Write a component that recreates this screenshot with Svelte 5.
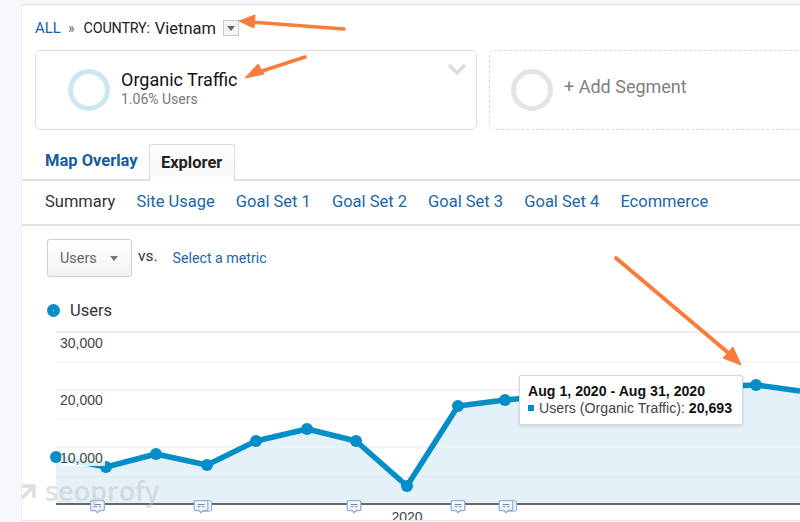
<script lang="ts">
  const subTabs = ['Site Usage', 'Goal Set 1', 'Goal Set 2', 'Goal Set 3', 'Goal Set 4', 'Ecommerce'];

  const chartLeft = 56;
  const chartTop = 330;
  const points = [
    [56, 457], [106, 467], [156, 454], [207, 465], [256, 441], [307, 429], [356, 441], [407, 486],
    [458, 406], [505, 400], [555, 395], [605, 390], [655, 388], [705, 387], [756, 385], [800, 391],
  ].map(([x, y]) => [x - chartLeft, y - chartTop]);
  const baseline = 174;
  const linePath = points.map(([x, y]) => `${x},${y}`).join(' ');
  const areaPath = `0,${baseline} ${linePath} 744,${baseline}`;
  const gridLines = [2, 32, 60, 89, 117, 147];
  const yLabels = [
    { text: '30,000', y: 18 },
    { text: '20,000', y: 75 },
    { text: '10,000', y: 133 },
  ];
  // stacked: a second note sits right behind the first one
  const notes = [
    { x: 41.5 },
    { x: 145, stacked: true },
    { x: 298 },
    { x: 402 },
    { x: 450, stacked: true },
  ];
</script>

<div class="page">
  <main class="panel">
    <nav class="crumbs">
      <span class="all">ALL</span>
      <span class="sep">»</span>
      <span class="country">COUNTRY:</span>
      <span class="value">Vietnam</span>
      <span class="drop"><i></i></span>
    </nav>

    <section class="segments">
      <div class="segment">
        <span class="ring blue"></span>
        <div class="seg-text">
          <div class="seg-name">Organic Traffic</div>
          <div class="seg-sub">1.06% Users</div>
        </div>
        <svg class="chev" width="20" height="12" viewBox="0 0 20 12">
          <path d="M2 2l8 8 8-8" fill="none" stroke="#dcdcdc" stroke-width="3.5" />
        </svg>
      </div>
      <div class="segment add">
        <span class="ring grey"></span>
        <span class="add-label">+ Add Segment</span>
      </div>
    </section>

    <div class="tabs">
      <span class="tab">Map Overlay</span>
      <span class="tab active">Explorer</span>
    </div>

    <div class="subtabs">
      <span class="current">Summary</span>
      {#each subTabs as t}
        <span class="link">{t}</span>
      {/each}
    </div>

    <div class="metric-row">
      <span class="metric-btn">Users <i></i></span>
      <span class="vs">vs.</span>
      <span class="select">Select a metric</span>
    </div>

    <div class="legend">
      <span class="dot"></span>
      <span>Users</span>
    </div>

    <div class="chart">
      <svg class="plot" width="744" height="192" viewBox="0 0 744 192">
        {#each gridLines as y, i}
          <line x1="0" x2="744" y1={y} y2={y} stroke={i % 2 === 0 ? '#eeeeee' : '#f6f6f6'} stroke-width={i === 0 ? 2 : 1.5} />
        {/each}
        <polygon points={areaPath} fill="#e4f1f8" />
        <line x1="0" x2="744" y1="117" y2="117" stroke="#f0f4f6" />
        <line x1="0" x2="744" y1="147" y2="147" stroke="#dbe9f0" />
        <line x1="0" x2="744" y1={baseline} y2={baseline} stroke="#666" stroke-width="2" />
        <polyline points={linePath} fill="none" stroke="#058dc7" stroke-width="5.5" stroke-linejoin="round" />
        {#each points as [x, y], i}
          {#if i !== 15}
            <circle cx={x} cy={y} r="6" fill="#058dc7" />
          {/if}
        {/each}
        <rect x="5" y="120" width="44" height="16" fill="#fff" opacity="0.85" />
        {#each yLabels as l}
          <text class="ylabel" x="4" y={l.y}>{l.text}</text>
        {/each}
        {#each notes as n}
          <g transform="translate({n.x - 7.5},170)">
            {#if n.stacked}
              <path d="M6 .7h11a1 1 0 0 1 1 1v8.500a1 1 0 0 1-1 1h-11z" fill="#eef4fa" stroke="#8fb2d4" />
            {/if}
            <path d="M1.700 .7h11.600a1 1 0 0 1 1 1v7.800a1 1 0 0 1-1 1h-3.800l-2 2.200-2-2.200h-3.800a1 1 0 0 1-1-1v-7.800a1 1 0 0 1 1-1z" fill="#f4f8fc" stroke="#8fb2d4" stroke-width="1.300" />
            <path d="M4 4.500h7M4 6.700h3M8.500 6.700h2.500" stroke="#7d868e" fill="none" />
          </g>
        {/each}
        <text class="xlabel" x="351" y="192" text-anchor="middle">2020</text>
      </svg>

      <div class="watermark">
        <svg width="18" height="16" viewBox="0 0 18 16">
          <path d="M2 3h13v12M15 3L3 15" fill="none" stroke="#dcdedf" stroke-width="3.500" />
        </svg>
        <span>seoprofy</span>
      </div>

      <div class="tooltip">
        <div class="tip-date">Aug 1, 2020 - Aug 31, 2020</div>
        <div class="tip-row"><i></i>Users (Organic Traffic): <b>20,693</b></div>
      </div>
    </div>
  </main>

  <!-- hand-drawn annotations on top of the screenshot -->
  <svg class="arrows" width="800" height="522" viewBox="0 0 800 522">
    <g fill="#f97c3c" stroke="#f97c3c">
      <path d="M344 29L250 22" stroke-width="3.500" stroke-linecap="round" />
      <path d="M239 21L255 15 254 28z" />
      <path d="M305 57L256 73" stroke-width="3.500" stroke-linecap="round" />
      <path d="M245 78L258 64 264 74z" />
      <path d="M616 258L732 356" stroke-width="4" stroke-linecap="round" />
      <path d="M741 365L723 358 733 347z" />
    </g>
  </svg>
</div>

<style>
  :global(body) {
    margin: 0;
    background: #f6f8fb;
  }

  .page {
    position: relative;
    width: 800px;
    height: 522px;
    overflow: hidden;
    font-family: Roboto, sans-serif;
    padding-top: 4px;
    box-sizing: border-box;
  }

  .panel {
    margin-left: 21px;
    height: 517px;
    background: #fff;
    border-top: 1px solid #e2e2e2;
    border-left: 1px solid #eceef1;
    border-bottom: 1px solid #e2e4e6;
    box-sizing: border-box;
    overflow: hidden;
  }

  .crumbs {
    display: flex;
    align-items: center;
    height: 24px;
    margin-top: 11px;
    padding-left: 13px;
    color: #222;
  }

  .all {
    color: #1a5f9e;
    font-size: 15px;
  }

  .sep {
    margin: 0 9px 0 7px;
    color: #666;
    font-size: 14px;
  }

  .country {
    font-size: 14.4px;
    letter-spacing: -0.2px;
  }

  .value {
    margin-left: 5px;
    font-size: 16.5px;
  }

  .drop {
    display: flex;
    align-items: center;
    justify-content: center;
    width: 14px;
    height: 14px;
    margin-left: 7px;
    border: 1px solid #c8c8c8;
    background: #f4f4f4;
  }

  .drop i {
    border: 4.5px solid transparent;
    border-top: 5px solid #666;
    border-bottom: 0;
  }

  .segments {
    display: flex;
    gap: 12px;
    margin: 10px 0 0 13px;
  }

  .segment {
    position: relative;
    display: flex;
    align-items: center;
    width: 442px;
    height: 80px;
    flex: none;
    box-sizing: border-box;
    border: 1px solid #dedede;
    border-radius: 5px;
    padding-left: 32px;
  }

  .segment.add {
    width: 360px;
    border: 1px dashed #d8d8d8;
    padding-left: 21px;
  }

  .ring {
    width: 42px;
    height: 42px;
    box-sizing: border-box;
    border-radius: 50%;
    border: 5px solid #cde6f3;
    flex: none;
  }

  .ring.grey {
    border-color: #e4e4e4;
  }

  .seg-text {
    margin-left: 11px;
    margin-top: -4px;
  }

  .seg-name {
    font-size: 18px;
    line-height: 22px;
    color: #111;
  }

  .seg-sub {
    font-size: 14px;
    line-height: 16px;
    color: #777;
  }

  .add-label {
    margin: 0 0 8px 11px;
    font-size: 18px;
    color: #808080;
  }

  .chev {
    position: absolute;
    right: 9px;
    top: 12px;
  }

  .tabs {
    display: flex;
    align-items: flex-end;
    height: 38px;
    margin-top: 11px;
    border-bottom: 2px solid #e0e0e0;
    font-size: 16.5px;
    font-weight: 700;
    color: #125da0;
  }

  .tab {
    padding: 0 11px 9px 23px;
  }

  .tab.active {
    width: 86px;
    height: 37px;
    box-sizing: border-box;
    padding: 8px 0 0;
    text-align: center;
    margin-bottom: -2px;
    color: #222;
    border: 1px solid #dcdcdc;
    border-bottom: 0;
    border-radius: 3px 3px 0 0;
    background: linear-gradient(#fff, #f8f8f8 70%, #fff);
  }

  .subtabs {
    display: flex;
    align-items: center;
    gap: 21.1px;
    height: 45px;
    padding: 0 0 2px 23px;
    box-sizing: border-box;
    border-bottom: 2px solid #e0e0e0;
    font-size: 16.5px;
    color: #1a66a8;
    white-space: nowrap;
  }

  .current {
    color: #333;
  }

  .metric-row {
    display: flex;
    align-items: center;
    height: 40px;
    margin: 12px 0 0 25px;
  }

  .metric-btn {
    display: flex;
    align-items: center;
    justify-content: space-between;
    width: 85px;
    height: 38px;
    box-sizing: border-box;
    padding: 0 13px 0 12px;
    border: 1px solid #d0d0d0;
    border-radius: 3px;
    background: linear-gradient(#fff, #f2f2f2);
    font-size: 14.4px;
    color: #666;
  }

  .metric-btn i {
    border: 4.5px solid transparent;
    border-top: 5px solid #777;
    border-bottom: 0;
  }

  .vs {
    margin: -4px 0 0 6px;
    font-size: 15.5px;
    color: #333;
  }

  .select {
    margin-left: 15px;
    font-size: 14.2px;
    color: #1a66a8;
  }

  .legend {
    display: flex;
    align-items: center;
    gap: 10px;
    margin: 22px 0 0 25px;
    height: 20px;
    font-size: 16.5px;
    color: #333;
  }

  .dot {
    position: relative;
    width: 13px;
    height: 13px;
    border-radius: 50%;
    background: #058dc7;
  }

  .dot::after {
    content: '';
    position: absolute;
    left: 6px;
    top: 6px;
    width: 1px;
    height: 1px;
    background: #bfe3f2;
  }

  .chart {
    position: relative;
    margin: 10px 0 0 34px;
    height: 192px;
  }

  .plot {
    display: block;
    overflow: visible;
  }

  .ylabel {
    font: 14px "Liberation Sans", sans-serif;
    fill: #444;
  }

  .xlabel {
    font: 14px "Liberation Sans", sans-serif;
    fill: #444;
  }

  .watermark {
    position: absolute;
    left: -37px;
    top: 145px;
    display: flex;
    align-items: center;
    gap: 8px;
    font-family: "Open Sans", sans-serif;
    font-size: 27px;
    line-height: 32px;
    font-weight: 600;
    color: rgba(190, 195, 198, 0.5);
  }

  .tooltip {
    position: absolute;
    left: 463px;
    top: 45px;
    width: 224px;
    height: 50px;
    box-sizing: border-box;
    padding: 7px 8px;
    background: #fff;
    border: 1px solid #d8d8d8;
    border-radius: 2px;
    box-shadow: 0 1px 3px rgba(0, 0, 0, 0.15);
    font: 14.15px/17px "Liberation Sans", sans-serif;
    color: #444;
    white-space: nowrap;
  }

  .tip-date {
    font-weight: 700;
    color: #111;
  }

  .tip-row i {
    display: inline-block;
    width: 6px;
    height: 6px;
    margin: 0 5px 2px 0;
    background: #058dc7;
  }

  .tip-row b {
    color: #111;
  }

  .arrows {
    position: absolute;
    inset: 0;
    pointer-events: none;
  }
</style>
